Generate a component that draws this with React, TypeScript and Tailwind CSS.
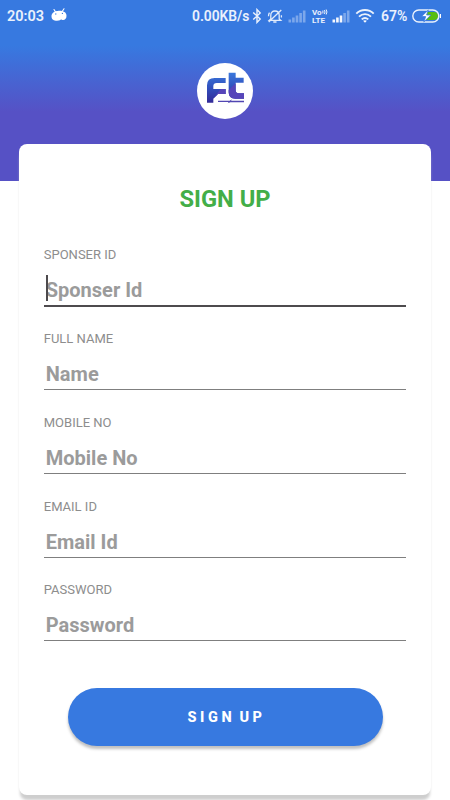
import { useState } from 'react';

interface Field {
  id: string;
  label: string;
  placeholder: string;
  type: string;
}

const fields: Field[] = [
  { id: 'sponser', label: 'SPONSER ID', placeholder: 'Sponser Id', type: 'text' },
  { id: 'name', label: 'FULL NAME', placeholder: 'Name', type: 'text' },
  { id: 'mobile', label: 'MOBILE NO', placeholder: 'Mobile No', type: 'tel' },
  { id: 'email', label: 'EMAIL ID', placeholder: 'Email Id', type: 'email' },
  { id: 'password', label: 'PASSWORD', placeholder: 'Password', type: 'password' },
];

function StatusBar() {
  return (
    <div className="flex h-8 items-center text-[13.5px] font-semibold text-white/90">
      <span className="mt-px ml-[7px] w-[44px] whitespace-nowrap text-[14.5px]">20:03</span>
      <svg width="16" height="14" viewBox="0 0 16 14" className="-mt-0.5" fill="#fff">
        <path d="M3 1.5 4.6 4M13 .8 11.2 3.5" stroke="#fff" strokeWidth="1.1" strokeLinecap="round" />
        <path d="M.5 8.5C.4 4.8 3.4 3 7 2.9c5-.3 8.3 1.2 8.5 4.7.2 3-1.5 4.4-3.4 4.4-1 0-1.5-.5-2-.5-.8 0-1.3 1.3-4.1 1.3C2.8 12.8.6 11.7.5 8.5Z" />
        <circle cx="4.8" cy="6" r=".65" fill="#3779e0" />
        <circle cx="11.4" cy="5.4" r=".65" fill="#3779e0" />
      </svg>
      <span className="ml-[125px] w-[60px] whitespace-nowrap text-[13.8px]">0.00KB/s</span>
      <svg width="10" height="16" viewBox="0 0 10 16" fill="none" stroke="#fff" strokeOpacity=".9" strokeWidth="1.4">
        <path d="m1.2 4.4 7 6.6L5 14.4V1.6L8.2 5l-7 6.6" />
      </svg>
      <svg width="16" height="16" viewBox="0 0 16 16" className="ml-[5px]" fill="none" stroke="#fff" strokeOpacity=".85" strokeWidth="1.3">
        <path d="M3.8 11V7.2C3.8 4.7 5.3 3 7.9 3s4.3 1.7 4.3 4.2V11l1.5 1.3H2.3L3.8 11ZM6.3 14h3.2M1.7 14 14.3 2M1.5 8.3c0-1.6.3-2.6 1-3.6M14.4 7.2v2.3" />
      </svg>
      <SignalBars level={0} className="ml-[5px]" />
      <div className="ml-[6px] flex w-[16px] flex-col gap-px text-[8px] font-bold">
        <span className="flex h-[7px] items-center leading-[7px] whitespace-nowrap">
          Vo
          <svg width="6" height="6" viewBox="0 0 6 6" fill="none" stroke="#fff" strokeWidth=".9">
            <path d="M.9 1.5v3M2.5 1q1 2 0 4M4.2.5q1.5 2.5 0 5" />
          </svg>
        </span>
        <span className="h-[7px] leading-[7px]">LTE</span>
      </div>
      <SignalBars level={3} className="ml-[4px]" />
      <svg width="20" height="16" viewBox="0 0 20 16" className="ml-[5px]" fill="none" stroke="#fff" strokeOpacity=".9" strokeWidth="1.9">
        <path d="M1.3 5.6C6.2.8 13.8.8 18.7 5.6M4 8.6c3.5-3.3 8.5-3.3 12 0M6.7 11.4c2-1.8 4.6-1.8 6.6 0" />
        <path d="m8.1 12.8 1.9 1.9 1.9-1.9c-1.1-.8-2.7-.8-3.8 0Z" fill="#fff" stroke="none" />
      </svg>
      <span className="ml-[6px] w-[29px] whitespace-nowrap text-[14px]">67%</span>
      <svg width="31" height="16" viewBox="0 0 31 16" className="ml-px">
        <path d="M15 4h8a4 4 0 0 1 0 8h-8Z" fill="#58bd10" />
        <rect x="1.8" y="2" width="26" height="12" rx="6" fill="none" stroke="#fff" strokeOpacity=".9" strokeWidth="1.4" />
        <path d="M29.4 6v4" stroke="#fff" strokeWidth="1.2" />
        <path d="m17.3 2-6.8 6.6h4.2L12.8 14l7.1-7h-4.3Z" fill="#fff" stroke="#3779e0" strokeWidth=".8" />
      </svg>
    </div>
  );
}

function SignalBars({ level, className }: { level: number; className: string }) {
  return (
    <svg width="18" height="13" viewBox="0 0 18 13" className={className} fill="#fff">
      {[3, 5, 7, 9.5, 12].map((height, i) => (
        <rect key={height} x={0.5 + i * 3.6} y={12.5 - height} width="2.6" height={height} opacity={i < level ? 0.95 : 0.35} />
      ))}
    </svg>
  );
}

function Logo() {
  return (
    <svg width="56" height="56" viewBox="-9 -9 168 168" className="rounded-full bg-white">
      <defs>
        <linearGradient id="letter" x1="0" y1="20" x2="0" y2="110" gradientUnits="userSpaceOnUse">
          <stop offset="0" stopColor="#3a78dc" />
          <stop offset=".5" stopColor="#3150bd" />
          <stop offset="1" stopColor="#332a98" />
        </linearGradient>
      </defs>
      <path d="M21 110V58Q21 36 44 36H77V51H50Q40 51 40 60V69H77V84H54L40 98V110Z" fill="url(#letter)" />
      <path d="M86 20H107V35H131V50H107V73Q107 82 116 82H132V98H106Q86 98 86 79Z" fill="url(#letter)" />
      <path d="M40 98 62 69H77V84H54ZM86 72 107 52V73Q107 82 116 82H132V98H106Q86 98 86 79Z" fill="#5745b9" />
      <path d="M54 104H89L96 100 93 104H132V109H91L83 112 86 108H54Z" fill="#5146b2" />
    </svg>
  );
}

export default function App() {
  const [values, setValues] = useState<Record<string, string>>({});
  const [active, setActive] = useState('sponser');

  return (
    <div className="h-[800px] w-[450px] overflow-hidden bg-white font-['Roboto',sans-serif]">
      <header className="flex h-[181px] flex-col items-center bg-[linear-gradient(180deg,#3779e0_46px,#5651c5_112px)]">
        <div className="w-full">
          <StatusBar />
        </div>
        <div className="mt-[31px]">
          <Logo />
        </div>
      </header>

      <main className="relative mx-auto -mt-[37.5px] flex h-[651.5px] w-[412.5px] flex-col rounded-[8px] bg-white px-[25px] shadow-[0_6px_3px_-1px_#cecece]">
        <h1 className="mt-[40px] text-center text-[23.7px] leading-[30px] font-bold text-[#43ae48]">SIGN UP</h1>

        <form className="mt-[32.5px] flex flex-col" onSubmit={(e) => e.preventDefault()}>
          {fields.map((field) => (
            <div key={field.id} className="h-[83.85px]">
              <label htmlFor={field.id} className="block text-[13px] leading-[18px] text-[#8d8d8d]">
                {field.label}
              </label>
              <div className="relative">
                <input
                  id={field.id}
                  type={field.type}
                  placeholder={field.placeholder}
                  value={values[field.id] ?? ''}
                  onFocus={() => setActive(field.id)}
                  onChange={(e) => setValues({ ...values, [field.id]: e.target.value })}
                  className={`mt-[7px] block w-full pt-[4px] pl-[2px] text-[20px] font-bold text-[#444] outline-none placeholder:text-[#9b9b9b] ${
                    active === field.id ? 'h-[36px] border-b-2 border-[#4e4b4e]' : 'h-[35px] border-b border-[#7f7f7f]'
                  }`}
                />
                {active === field.id && !values[field.id] && (
                  <span className="absolute top-[4px] left-[2px] h-[26px] w-[2px] bg-[#4d4a4d]" />
                )}
              </div>
            </div>
          ))}

          <button
            type="submit"
            className="mx-auto mt-[22.75px] h-[58px] w-[315px] rounded-full bg-[#3779e0] pt-[1px] pl-[3px] text-[14.5px] font-extrabold tracking-[3.6px] text-white [word-spacing:-3px] shadow-[0_3px_3px_rgba(0,0,0,0.25)]"
          >
            SIGN UP
          </button>
        </form>
      </main>
    </div>
  );
}
